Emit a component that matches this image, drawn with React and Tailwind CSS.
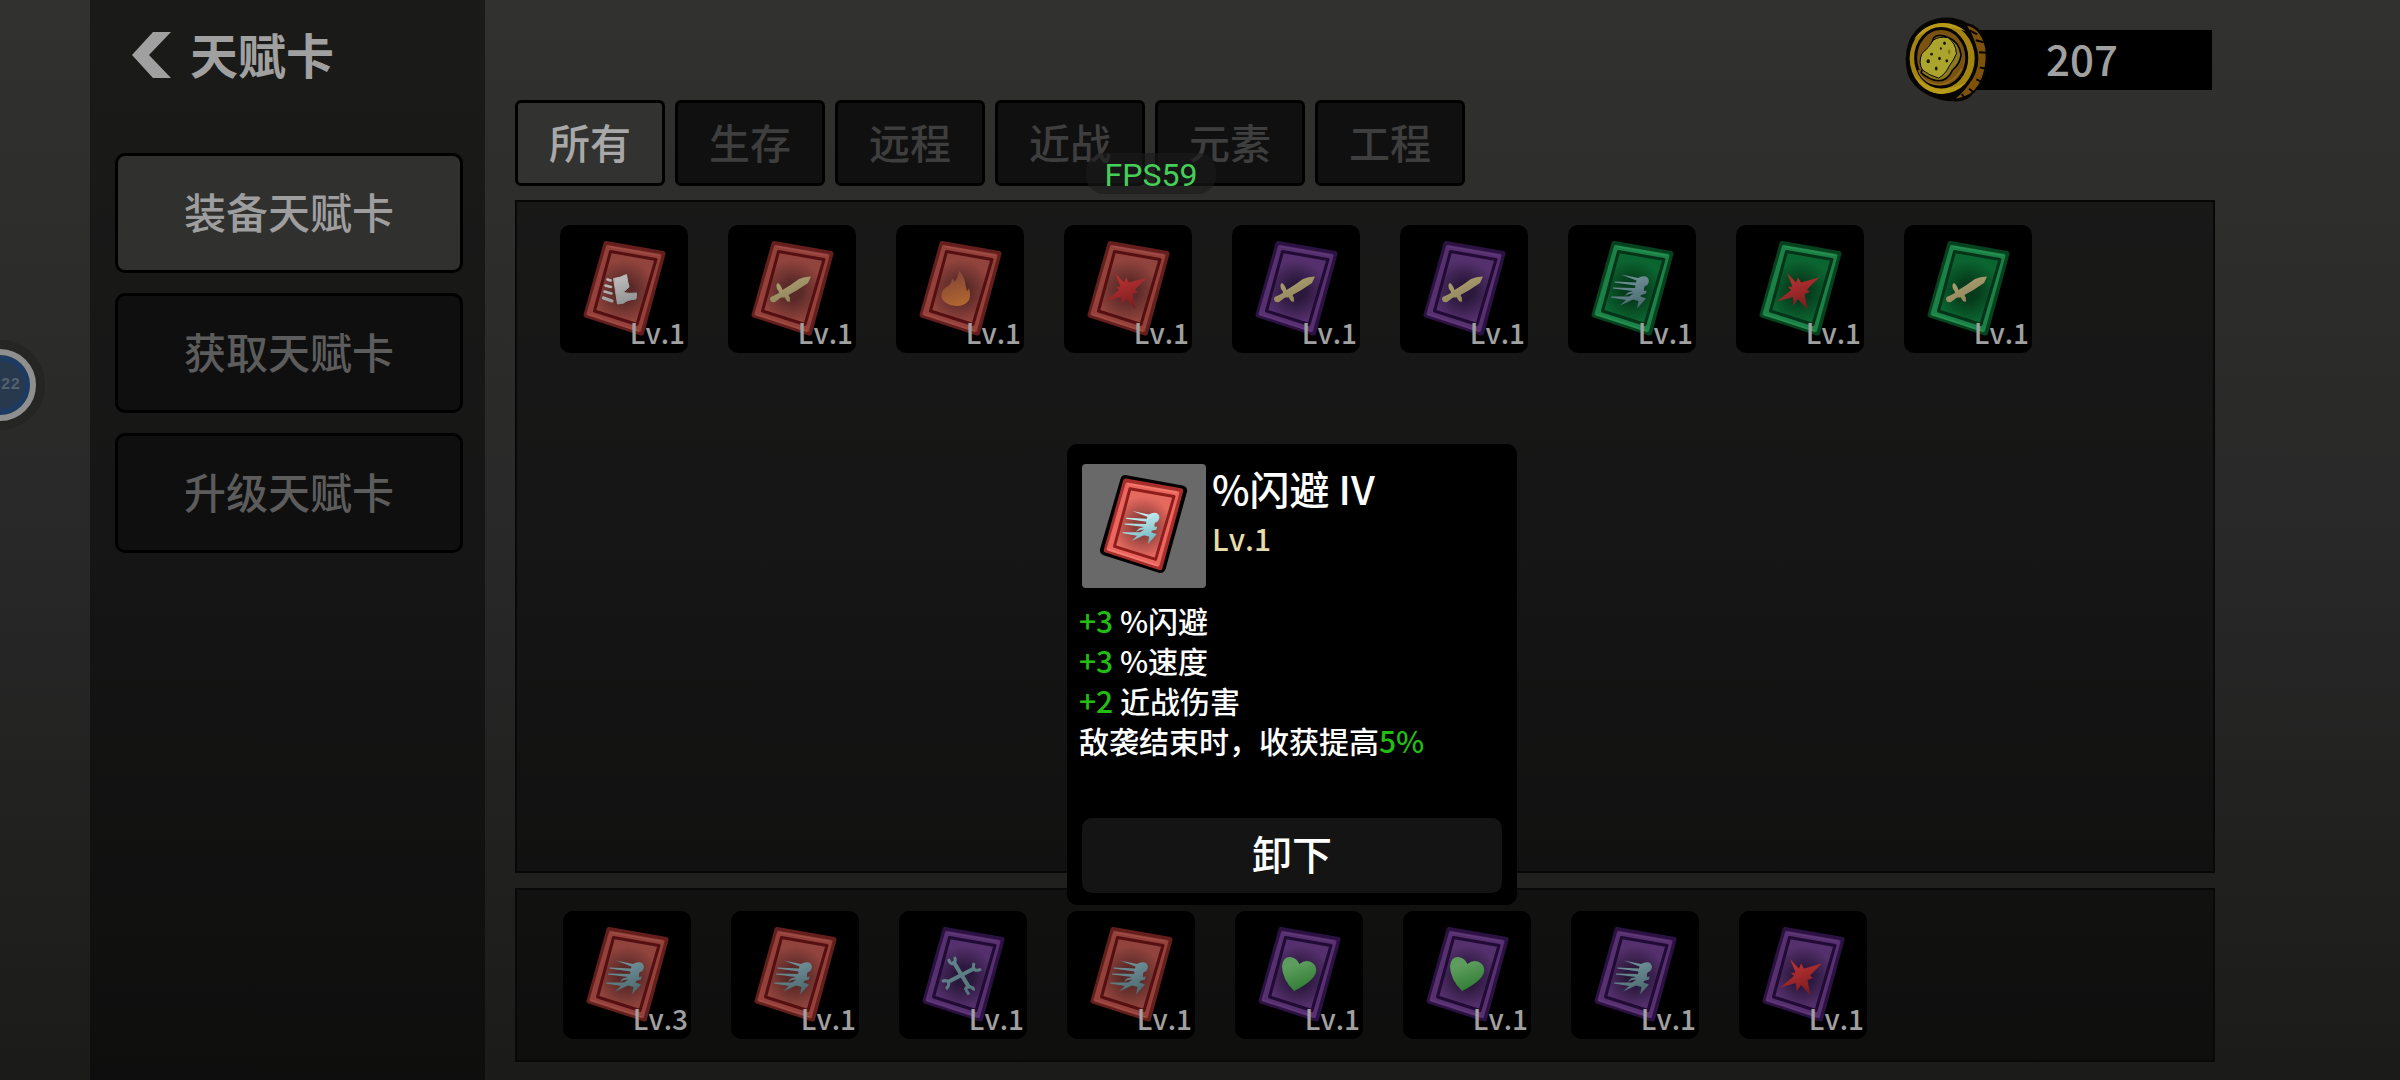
import React, { useId } from "react";

const PALETTES = {
  red: { rim: "#641f1d", band: "#94403b", line: "#541010", fill: "#91433d", core: "#5a2a28", glint: "#9e4c45" },
  purple: { rim: "#2c1242", band: "#57306f", line: "#210a33", fill: "#54306c", core: "#2b183c", glint: "#5e3877" },
  green: { rim: "#07421f", band: "#1c8147", line: "#043317", fill: "#0b6531", core: "#063b1b", glint: "#25904f" },
  bright: { rim: "#a82e2b", band: "#e9675f", line: "#8d1c1a", fill: "#e4695f", core: "#8c3f3b", glint: "#f47c72" },
};

function Emblem({ kind, id }) {
  const paint = `url(#${id}-e)`;
  if (kind === "boot")
    return (
      <g fill={paint} stroke={paint} strokeLinejoin="round" strokeLinecap="round">
        <path d="M54 53.500Q60 53 66.500 49.500Q67.500 57 69 62L63 67.500Q70 69 76.500 68L76 74Q66 75 64 78L57.500 79L55.500 66Z" strokeWidth="1" />
        <path d="M47.500 54.500L50.500 55.500M45.500 60.500L51 62M44.500 66.500L51.500 68.500" strokeWidth="2.600" fill="none" />
        <path d="M43.500 73L52 76" strokeWidth="3.200" fill="none" />
      </g>
    );
  if (kind === "sword")
    return (
      <path
        fill={paint}
        d="M83 51.500L80 58Q70 65 60.500 70Q62.500 72.500 62 76.500Q58.500 77.500 57 72.500L53 72.500L47 77Q42.500 78 42 74Q42 71.500 45 71L51 68Q51.500 66.500 49 64Q47.500 59 50 58Q53 60 54.500 65Q63 60 71 54Q76 51.500 83 51.500Z"
      />
    );
  if (kind === "flame")
    return (
      <path
        fill={paint}
        d="M63 46Q68 51 69 57Q69.500 62 71 66Q72.500 66 73 63Q75 70 73 75Q69 81 60 81Q50 80 46 74Q44 67 49 63Q55 60 56 54Q58 54 58.500 57Q62 53 63 46Z"
      />
    );
  if (kind === "burst")
    return (
      <path
        fill={paint}
        d="M51 48L60 57.500L62 52.500L65 57.500L83 52.500L71 64.500L74 67L68.500 69L71.500 84.500L62 74L57.500 80.500L57 72L41 76.500L55 65L52 62L56.500 61.500Z"
      />
    );
  if (kind === "runner")
    return (
      <path
        fill={paint}
        d="M53 49.500L70 53Q74 50.500 78 51.500Q82 54 80.500 58Q79.500 61 76.500 61.500Q75.500 64 76 66L78.500 65.500L78 68.500L73 70L72.500 71.500L78 73.500L69 83.500L70.500 76L65 74.500L52 80.500L58 75L43 72.500L43 71.500L61 71.500L65.500 68.500L61 69L56.500 71L60 67.500L65 66L45 63.500L45 62.500L67 63L67.500 60.500L46.500 57.500L46.500 56.500L68 57.500L68.500 55.500Z"
      />
    );
  if (kind === "wrench")
    return (
      <g stroke={paint} fill="none" strokeLinecap="butt">
        <path d="M54 50L70.500 77M76 57L48 71.500" strokeWidth="4.200" />
        <path
          d="M49.500 48Q51 53.500 54.500 52.500Q57.500 50.500 55.500 46M66 79Q68 74.500 71.500 76Q75 77 74.500 79.500M67 79L70 83.500M75 52Q73.500 57 76 59Q79 60 82 58M43 70.500Q47 68.500 49.500 71Q50.500 75 47 78"
          strokeWidth="3"
        />
      </g>
    );
  return (
    <path
      fill={paint}
      d="M59 80Q47 68 47 55Q48 46 55 46Q62 47 64.500 53Q70 48 76 51Q82 54 81 61Q79 70 59 80Z"
    />
  );
}

const EMBLEM_COLORS = {
  boot: ["#b9b9b9", "#8d8d8d"],
  sword: ["#a99d6f", "#8a7d54"],
  flame: ["#8d4c34", "#b56a30"],
  burst: ["#b22f30", "#7c1d20"],
  runner: ["#6f8f97", "#4c6a70"],
  wrench: ["#5f8288", "#55777c"],
  heart: ["#5c9c5c", "#2c7a30"],
};

function CardArt({ color, kind, className }) {
  const id = useId();
  const p = PALETTES[color];
  const bright = color === "bright";
  const [a, b] = bright ? ["#c5edf2", "#6fb6c0"] : EMBLEM_COLORS[kind];
  return (
    <svg viewBox={bright ? "1 1 128 128" : "0 0 128 128"} className={className} aria-hidden="true">
      <defs>
        <radialGradient id={`${id}-f`} gradientUnits="userSpaceOnUse" cx="64" cy="66" r="31">
          <stop offset="0.300" stopColor={p.core} />
          <stop offset="1" stopColor={p.fill} />
        </radialGradient>
        <linearGradient id={`${id}-e`} gradientUnits="userSpaceOnUse" x1="56" y1="48" x2="68" y2="82">
          <stop offset="0.200" stopColor={a} />
          <stop offset="1" stopColor={b} />
        </linearGradient>
      </defs>
      <g strokeLinejoin="round">
        {bright && <path d="M46 18L104 28.500L82 108L25 90Z" fill="#000" stroke="#000" strokeWidth="11" />}
        <path d="M46 18.500L103 28.500L81.500 108L26 90Z" fill={p.rim} stroke={p.rim} strokeWidth="5" />
        <path d="M47.500 21.500L100 30.500L79.500 105.500L28 89Z" fill={p.band} stroke={p.band} strokeWidth="3" />
        <path d="M48.500 21.500L99 30.500M28 89L79 106" stroke={p.glint} strokeWidth="1.500" fill="none" />
        <path d="M50.500 26.500L96 34.500L77 99.500L34.500 86Z" fill={`url(#${id}-f)`} stroke={p.line} strokeWidth="3" />
      </g>
      <Emblem kind={kind} id={id} />
    </svg>
  );
}

function CardSlot({ card, children }) {
  return (
    <li className="relative">
      <button type="button" className="relative block size-32 rounded-[10px] bg-black">
        <CardArt color={card.color} kind={card.kind} className="block size-32" />
        <span className="absolute right-[3px] bottom-px text-[28px] leading-10 font-medium text-[#a0a0a0] [font-kerning:none]">Lv.{card.level}</span>
      </button>
      {children}
    </li>
  );
}

const OWNED = [
  { color: "red", kind: "boot", level: 1 },
  { color: "red", kind: "sword", level: 1 },
  { color: "red", kind: "flame", level: 1 },
  { color: "red", kind: "burst", level: 1 },
  { color: "purple", kind: "sword", level: 1 },
  { color: "purple", kind: "sword", level: 1 },
  { color: "green", kind: "runner", level: 1 },
  { color: "green", kind: "burst", level: 1 },
  { color: "green", kind: "sword", level: 1 },
];

const EQUIPPED = [
  { color: "red", kind: "runner", level: 3 },
  { color: "red", kind: "runner", level: 1 },
  { color: "purple", kind: "wrench", level: 1 },
  { color: "red", kind: "runner", level: 1, open: true },
  { color: "purple", kind: "heart", level: 1 },
  { color: "purple", kind: "heart", level: 1 },
  { color: "purple", kind: "runner", level: 1 },
  { color: "purple", kind: "burst", level: 1 },
];

function CardDetails() {
  return (
    <section className="absolute bottom-full left-0 z-10 mb-1.5 flex h-[461px] w-[450px] flex-col rounded-[10px] bg-black px-[15px] pt-5 pb-3 font-medium text-white">
      <header className="flex gap-1.5">
        <div className="size-[124px] shrink-0 rounded-sm bg-[#696969]">
          <CardArt color="bright" kind="runner" className="block size-[124px]" />
        </div>
        <div>
          <h2 className="text-[40px] leading-[48px]">%闪避 IV</h2>
          <p className="text-[30px] leading-[52px] text-[#e6dcab] [font-kerning:none]">Lv.1</p>
        </div>
      </header>
      <ul className="-ml-[3px] pt-3 text-[30px] leading-10 whitespace-nowrap">
        <li><span className="text-[#22bd12]">+3</span> %闪避</li>
        <li><span className="text-[#22bd12]">+3</span> %速度</li>
        <li><span className="text-[#22bd12]">+2</span> 近战伤害</li>
        <li>敌袭结束时，收获提高<span className="text-[#22bd12]">5%</span></li>
      </ul>
      <button type="button" className="mt-auto h-[75px] w-full rounded-[10px] bg-[#141414] pb-1.5 text-[40px] leading-none">
        卸下
      </button>
    </section>
  );
}

function Coin() {
  return (
    <svg viewBox="70 45 260 262" className="relative size-[87px] shrink-0" aria-hidden="true">
      <path d="M185 50Q230 46 262 66Q300 72 312 112Q326 150 324 188Q316 250 282 276Q262 306 220 302Q190 303 160 290Q105 270 84 222Q68 170 88 118Q118 58 185 50Z" fill="#060503" />
      <path d="M262 74Q306 84 317 145Q323 205 296 252Q276 286 228 294Q290 240 292 180Q294 120 262 74Z" fill="#7d5309" />
      <path d="M270 88L292 100M288 118L312 124M298 154L320 156M300 200L322 204M290 236L308 244M268 264L284 276M246 280L254 292" stroke="#060503" strokeWidth="6" />
      <ellipse cx="190" cy="173" rx="106" ry="112" fill="#060503" />
      <ellipse cx="187" cy="173" rx="98" ry="107" fill="#a4850f" />
      <path d="M102 116Q130 70 190 66Q230 66 258 92Q230 78 190 82Q130 88 102 116Z" fill="#b79a18" />
      <path d="M100 220Q130 278 186 280Q236 272 258 246Q226 262 186 264Q136 262 100 220Z" fill="#b79a18" />
      <ellipse cx="184" cy="171" rx="77" ry="88" fill="#7a5310" stroke="#060503" strokeWidth="9" />
      <path d="M116 208Q132 250 180 252Q222 246 246 204" fill="none" stroke="#93691a" strokeWidth="5" />
      <path d="M162 110Q178 96 210 112Q238 124 244 162Q240 190 218 208Q204 240 176 240Q150 238 124 216Z" fill="#8c7a1f" stroke="#060503" strokeWidth="5" />
      <path d="M160 118Q176 106 204 110Q228 126 230 158Q222 178 208 196Q196 222 176 232Q148 224 128 208Q114 186 126 158Q148 140 160 118Z" fill="#aba52e" stroke="#060503" strokeWidth="3" />
      <g fill="#17150a">
        <ellipse cx="194" cy="127" rx="4" ry="5" />
        <ellipse cx="183" cy="143" rx="3" ry="4" />
        <ellipse cx="155" cy="160" rx="4" ry="4" />
        <ellipse cx="145" cy="181" rx="5" ry="6" />
        <ellipse cx="179" cy="173" rx="4" ry="5" />
        <ellipse cx="201" cy="180" rx="4" ry="5" />
        <ellipse cx="169" cy="203" rx="4" ry="6" />
        <ellipse cx="208" cy="153" rx="4" ry="8" fill="#847a1c" />
      </g>
    </svg>
  );
}

const MENU = ["装备天赋卡", "获取天赋卡", "升级天赋卡"];
const TABS = ["所有", "生存", "远程", "近战", "元素", "工程"];

export default function App() {
  return (
    <div className="relative flex min-h-screen overflow-hidden bg-linear-to-b from-[#31312f] via-[#282828] to-[#1b1b1a] pl-[90px] font-['Noto_Sans_CJK_SC','Noto_Sans',sans-serif]">
      <aside className="w-[395px] shrink-0 bg-black/45 pr-[22px] pl-[25px]">
        <header className="flex h-[153px] items-start pt-[23px] pl-[17px]">
          <button type="button" aria-label="返回" className="flex h-16 w-10 items-center">
            <svg viewBox="0 0 40 46" className="h-[46px] w-10" aria-hidden="true">
              <path d="M21 0H39L17 23L39 46H21L0 23Z" fill="#a0a0a0" />
            </svg>
          </button>
          <h1 className="ml-[18px] text-[48px] leading-[60px] font-bold text-[#a0a0a0]">天赋卡</h1>
        </header>
        <nav className="flex flex-col gap-5">
          {MENU.map((label, i) => (
            <button
              key={label}
              type="button"
              className={
                "h-[120px] w-full rounded-[10px] border-[3px] border-black pb-1 text-[42px] leading-none font-medium " +
                (i === 0 ? "bg-[#30302f] text-[#9e9e9e]" : "bg-[#0f0f0f] text-[#5c5c5c]")
              }
            >
              {label}
            </button>
          ))}
        </nav>
      </aside>

      <main className="flex min-w-0 flex-1 flex-col pr-[185px] pb-[18px] pl-[30px]">
        <header className="flex h-[100px] items-start justify-end pt-4 pr-[3px]">
          <div className="flex items-center">
            <Coin />
            <p className="-ml-[38px] h-[60px] w-[260px] bg-black text-center text-[42px] leading-[56px] font-medium text-[#a0a0a0]">207</p>
          </div>
        </header>

        <nav className="flex gap-2.5">
          {TABS.map((label, i) => (
            <button
              key={label}
              type="button"
              className={
                "h-[86px] w-[150px] rounded-md border-[3px] border-black pb-1 text-[41px] leading-none font-medium " +
                (i === 0 ? "bg-[#323230] text-[#a8a8a8]" : "bg-[#101010] text-[#3e3e3e]")
              }
            >
              {label}
            </button>
          ))}
        </nav>

        <ul className="mt-3.5 flex flex-1 flex-wrap content-start gap-10 border-2 border-[#080808] bg-black/45 px-[43px] pt-[23px]">
          {OWNED.map((card, i) => (
            <CardSlot key={i} card={card} />
          ))}
        </ul>

        <ul className="mt-[15px] flex h-[174px] gap-10 border-2 border-[#080808] bg-black/45 px-[46px] pt-[21px]">
          {EQUIPPED.map((card, i) => (
            <CardSlot key={i} card={card}>
              {card.open && <CardDetails />}
            </CardSlot>
          ))}
        </ul>
      </main>

      <output className="absolute top-[153px] left-[1086px] h-[41px] w-[130px] rounded-[18px] bg-[#1a1a1a]/60 text-center font-['Roboto',sans-serif] text-[32px] leading-[44px] text-[#45cf58]">
        FPS59
      </output>

      <div className="absolute top-[340px] -left-[45px] flex size-[90px] items-center justify-center rounded-full bg-[#252524]">
        <div className="flex size-[72px] items-center justify-end rounded-full border-[6px] border-[#8f8f8f] bg-[#28394d] pr-2.5 shadow-[inset_0_0_0_6px_#1d3a60]">
          <span className="font-['Liberation_Mono',monospace] text-[16px] leading-none font-bold text-[#52616f]">22</span>
        </div>
      </div>
    </div>
  );
}
